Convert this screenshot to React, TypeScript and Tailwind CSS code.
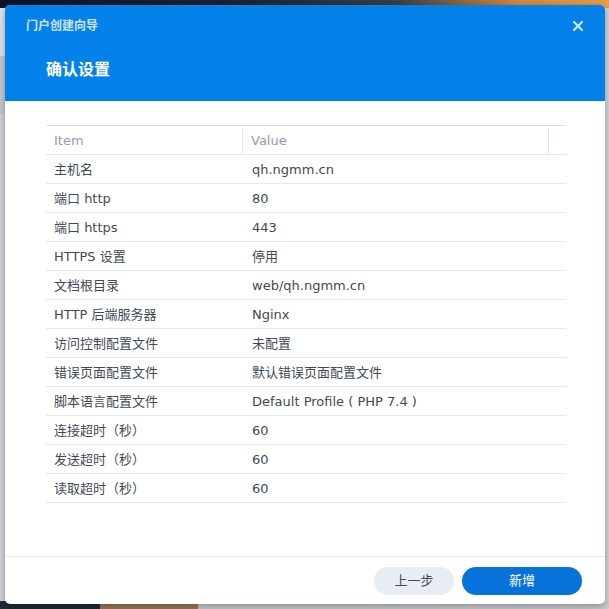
import { X } from "lucide-react";

const rows: [string, string][] = [
  ["主机名", "qh.ngmm.cn"],
  ["端口 http", "80"],
  ["端口 https", "443"],
  ["HTTPS 设置", "停用"],
  ["文档根目录", "web/qh.ngmm.cn"],
  ["HTTP 后端服务器", "Nginx"],
  ["访问控制配置文件", "未配置"],
  ["错误页面配置文件", "默认错误页面配置文件"],
  ["脚本语言配置文件", "Default Profile ( PHP 7.4 )"],
  ["连接超时（秒）", "60"],
  ["发送超时（秒）", "60"],
  ["读取超时（秒）", "60"],
];

const font = "font-['DejaVu_Sans','Noto_Sans_CJK_SC',sans-serif]";

export default function App() {
  return (
    <div className={`relative h-[609px] w-[609px] overflow-hidden bg-[#d3d8de] ${font}`}>
      {/* desktop behind the window */}
      <div className="absolute inset-x-0 top-0 h-[8px] bg-[linear-gradient(90deg,#0b1526_0%,#1a2436_40%,#3a3f48_65%,#d88a3a_85%,#e9a04a_100%)]" />
      <div className="absolute left-0 top-[8px] h-[48px] w-[8px] bg-[#e6e8eb]" />
      <div className="absolute left-0 top-[56px] h-[58px] w-[8px] bg-[#c9cdd2]" />
      <div className="absolute bottom-0 left-0 h-[8px] w-[100px] bg-[#1d2a33]" />
      <div className="absolute bottom-0 left-[100px] h-[8px] w-[98px] bg-[#9c7658]" />
      <div className="absolute bottom-0 left-[198px] h-[8px] w-[411px] bg-[#c9ccd0]" />

      <div className="relative pl-[5px] pt-[5px]">
        <div className="flex h-[599px] w-[600px] flex-col overflow-hidden rounded-[5px] bg-white shadow-[0_2px_8px_rgba(0,0,0,0.35)]">
          <div className="h-[96px] shrink-0 bg-[#0581ea]">
            <div className="flex h-[40px] items-center justify-between pl-[21px] pr-[19px] pt-[1px]">
              <span className="text-[12px] font-bold text-[#cfe3f8]">门户创建向导</span>
              <X className="h-[16px] w-[16px] text-[#d5e7fa]" strokeWidth={3.2} />
            </div>
            <div className="mt-[13px] pl-[41px] text-[16px] font-bold leading-[24px] text-white">确认设置</div>
          </div>

          <div className="flex-1 px-[41px] pt-[24px] text-[13px] text-[#3f4a56]">
            <div className="w-[520px] border-t border-[#dbe1e8]">
              <div className="flex h-[29px] border-b border-[#e4e9ee] pt-[2px] text-[#939ca7]">
                <div className="flex w-[197px] items-center border-r border-[#e4e9ee] pl-[8px]">Item</div>
                <div className="flex w-[306px] items-center border-r border-[#e4e9ee] pl-[8px]">Value</div>
                <div className="flex-1" />
              </div>
              {rows.map(([k, v]) => (
                <div key={k} className="flex h-[29px] items-center border-b border-[#e4e9ee] pt-[2px]">
                  <div className="w-[198px] pl-[8px]">{k}</div>
                  <div className="pl-[8px]">{v}</div>
                </div>
              ))}
            </div>
          </div>

          <div className="flex h-[48px] shrink-0 items-center justify-end gap-[8px] border-t border-[#e4e9ee] pr-[23px]">
            <button className="h-[28px] w-[80px] rounded-full bg-[#e8edf4] text-[13px] text-[#414b56]">上一步</button>
            <button className="h-[28px] w-[120px] rounded-full bg-[#0773da] text-[13px] text-white">新增</button>
          </div>
        </div>
      </div>
    </div>
  );
}
